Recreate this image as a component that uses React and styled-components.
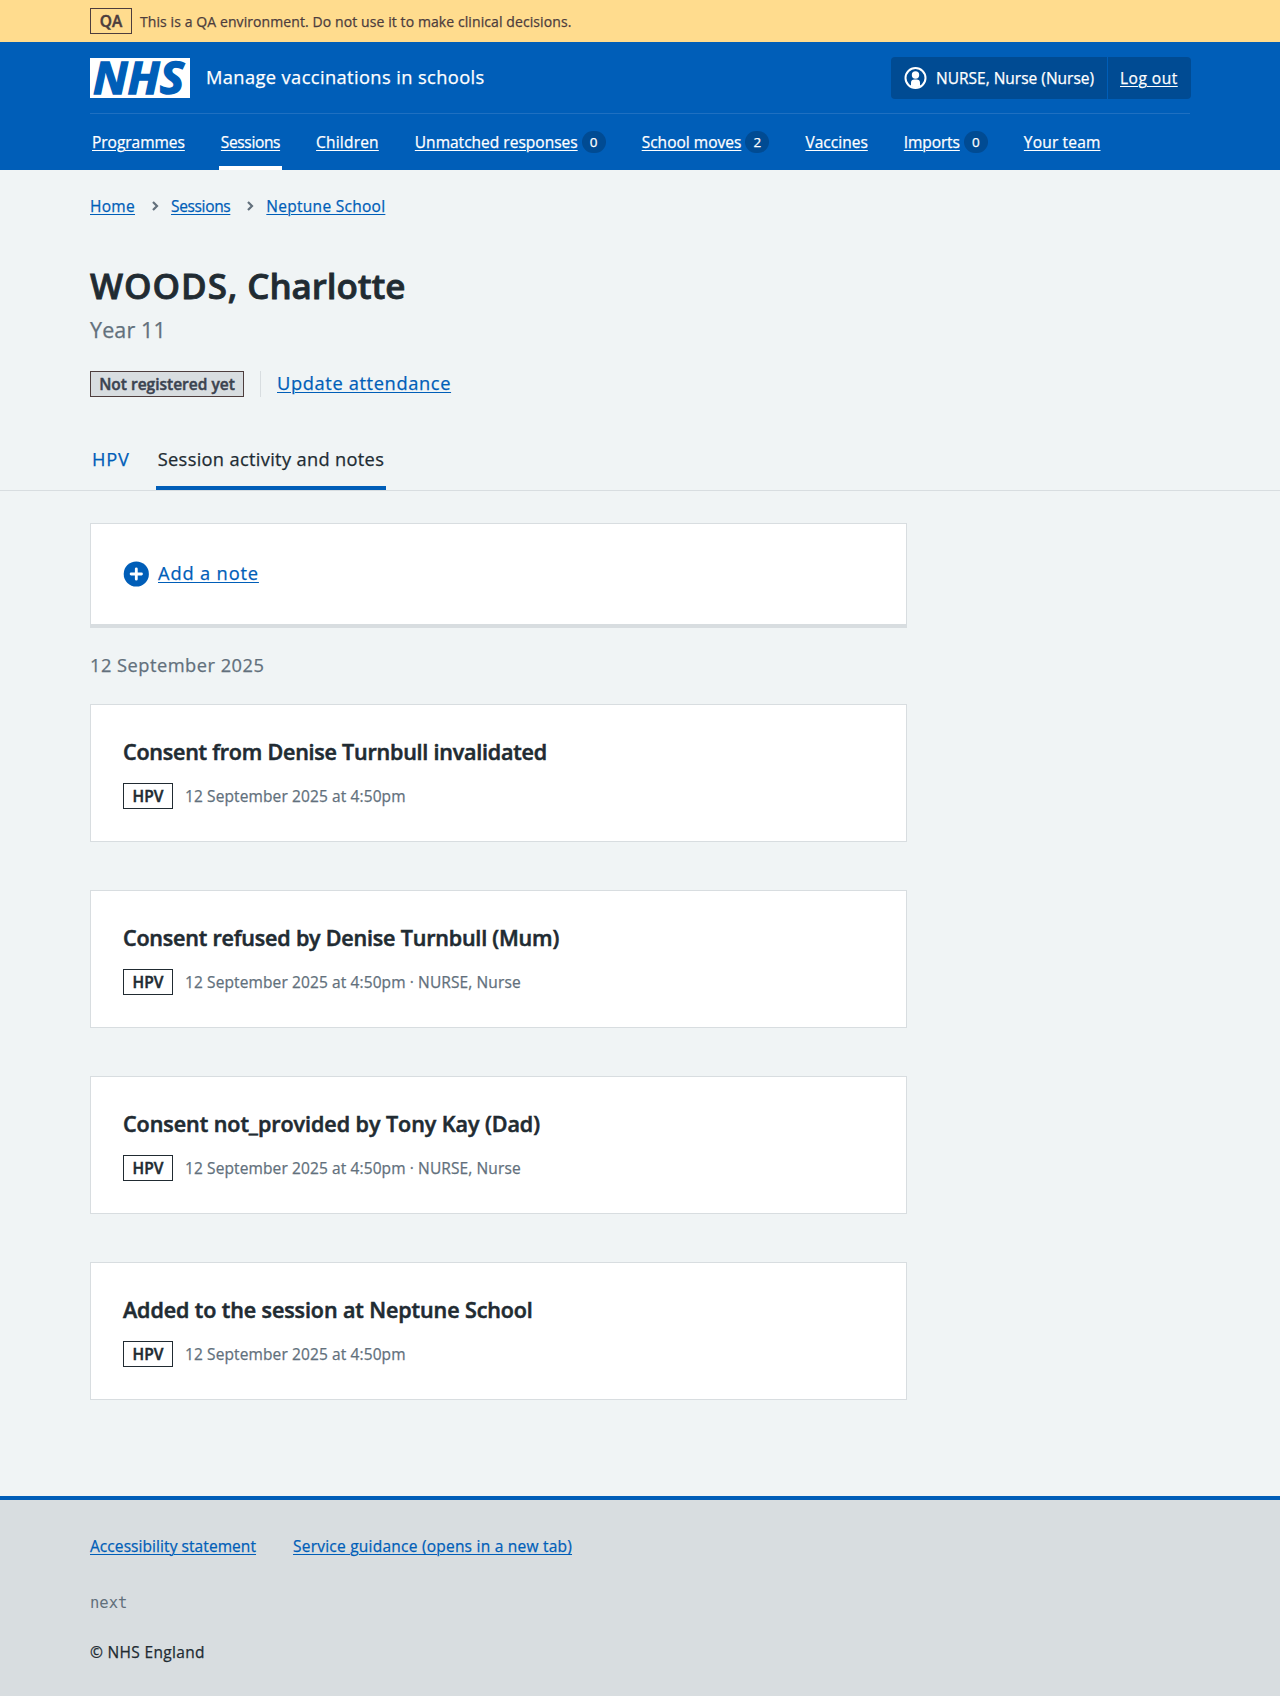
import React from "react";
import styled, { createGlobalStyle } from "styled-components";

const BLUE = "#005eb8";
const TEXT = "#212b32";
const GREY = "#d8dde0";
const MUTED = "#62707c";

const Global = createGlobalStyle`
  *, *::before, *::after { box-sizing: border-box; }
  body {
    margin: 0;
    background: #f0f4f5;
    color: ${TEXT};
    font-family: "Open Sans", "Noto Sans", "Liberation Sans", sans-serif;
    font-size: 15.5px;
    line-height: 24px;
    -webkit-text-stroke: 0.25px;
  }
  h1, h2, h3, p, ul, ol { margin: 0; padding: 0; font-weight: 400; list-style: none; }
`;

const Container = styled.div`
  width: 1100px;
  margin: 0 auto;
`;

const Banner = styled.div`
  height: 42px;
  background: #ffdc8e;
  color: #4d3d3d;
`;

const BannerRow = styled(Container)`
  display: flex;
  align-items: center;
  gap: 8px;
  height: 42px;
  font-size: 14px;
`;

const BannerText = styled.span`
  letter-spacing: 0.09px;
  padding-top: 1px;
`;

const Tag = styled.strong`
  display: inline-flex;
  align-items: center;
  justify-content: center;
  flex: none;
  width: ${(p) => p.$w}px;
  height: 26px;
  border: 1px solid ${(p) => p.$border || "currentColor"};
  background: ${(p) => p.$bg || "transparent"};
  color: ${(p) => p.$color || "inherit"};
  font-size: 15.5px;
  font-weight: 600;
  -webkit-text-stroke: 0.45px;
  letter-spacing: ${(p) => p.$track || 0}px;
  line-height: 24px;
`;

const Header = styled.header`
  height: 128px;
  background: ${BLUE};
  color: #fff;
`;

const HeaderTop = styled.div`
  display: flex;
  align-items: center;
  height: 72px;
  border-bottom: 1px solid #1f70c1;
`;

const Service = styled.span`
  margin-left: 16px;
  padding-bottom: 1px;
  font-size: 18.25px;
  letter-spacing: 0.4px;
`;

const Account = styled.div`
  display: flex;
  align-items: stretch;
  width: 300px;
  height: 42px;
  margin-left: auto;
  margin-right: -1px;
  border-radius: 4px;
  background: #004b93;
`;

const AccountUser = styled.div`
  display: flex;
  align-items: center;
  gap: 8px;
  width: 217px;
  padding-left: 13px;
  border-right: 1px solid ${BLUE};
  white-space: nowrap;
`;

const AccountAction = styled.div`
  display: flex;
  align-items: center;
  padding-left: 12px;
`;

const Link = styled.a`
  color: ${(p) => p.$color || BLUE};
  font-size: ${(p) => p.$size || 15.5}px;
  letter-spacing: ${(p) => p.$track || 0}px;
  text-decoration: underline;
  text-decoration-thickness: 1px;
  text-underline-offset: 2px;
  text-decoration-skip-ink: auto;
  white-space: nowrap;
`;

const LargeLink = styled(Link)`
  padding-bottom: 2px;
`;

const Nav = styled.ul`
  display: flex;
  gap: 32px;
  height: 56px;
`;

const NavItem = styled.li`
  display: flex;
  align-items: center;
  gap: 4px;
  height: 56px;
  padding: 4px 2px 0;
  border-bottom: 4px solid ${(p) => (p.$active ? "#fff" : "transparent")};
`;

const Count = styled.span`
  display: flex;
  align-items: center;
  justify-content: center;
  width: 24px;
  height: 22px;
  border-radius: 11px;
  background: #004b93;
  font-size: 13.5px;
`;

const Crumbs = styled.ol`
  display: flex;
  align-items: center;
  padding-top: 24px;
`;

const Chevron = styled.svg`
  display: block;
  margin: 0 11px 0 15px;
`;

const Title = styled.h1`
  margin-top: 44px;
  font-size: 35px;
  font-weight: 600;
  line-height: 48px;
  letter-spacing: -0.1px;
  -webkit-text-stroke: 0.8px;
`;

const Surname = styled.span`
  letter-spacing: 0.95px;
`;

const Caption = styled.p`
  margin-top: 4px;
  color: ${MUTED};
  font-size: 21.5px;
  line-height: 32px;
  letter-spacing: 0.12px;
`;

const StatusRow = styled.div`
  display: flex;
  align-items: center;
  gap: 16px;
  height: 26px;
  margin-top: 25px;
`;

const Divider = styled.span`
  width: 1px;
  height: 26px;
  background: ${GREY};
`;

const TabBar = styled.div`
  margin-top: 33px;
  border-bottom: 1px solid ${GREY};
`;

const Tabs = styled(Container)`
  display: flex;
  gap: 24px;
`;

const Tab = styled.span`
  height: 60px;
  padding: 17px 2px 0;
  border-bottom: 4px solid ${(p) => (p.$active ? BLUE : "transparent")};
  color: ${(p) => (p.$active ? TEXT : BLUE)};
  font-size: 18.25px;
  letter-spacing: ${(p) => p.$track}px;
`;

const Main = styled(Container)`
  padding: 32px 0 96px;
`;

const Column = styled.div`
  width: 817px;
`;

const Card = styled.section`
  padding: 32px;
  border: 1px solid ${GREY};
  background: #fff;
`;

const ActionCard = styled(Card)`
  display: flex;
  align-items: center;
  gap: 9px;
  height: 105px;
  border-bottom-width: 4px;
`;

const DateHeading = styled.h2`
  margin: 23px 0 25px;
  color: ${MUTED};
  font-size: 18.25px;
  line-height: 28px;
  letter-spacing: 0.49px;
`;

const Events = styled.div`
  display: grid;
  gap: 48px;
`;

const EventTitle = styled.h3`
  font-size: 21.5px;
  font-weight: 600;
  line-height: 30px;
  letter-spacing: ${(p) => p.$track}px;
  -webkit-text-stroke: 0.55px;
`;

const EventMeta = styled.div`
  display: flex;
  align-items: center;
  gap: 12px;
  height: 26px;
  margin-top: 16px;
  color: ${MUTED};
  letter-spacing: 0.11px;
`;

const Footer = styled.footer`
  height: 200px;
  border-top: 4px solid ${BLUE};
  background: ${GREY};
`;

const FooterLinks = styled.ul`
  display: flex;
  gap: 37px;
  padding-top: 34px;
`;

const Version = styled.p`
  margin-top: 33px;
  color: ${MUTED};
  font-family: "DejaVu Sans Mono", monospace;
  font-size: 15.5px;
  -webkit-text-stroke: 0;
`;

const Copyright = styled.p`
  margin-top: 25px;
  letter-spacing: 0.32px;
`;

const LogoSvg = styled.svg`
  display: block;
  overflow: visible;
  -webkit-text-stroke: 0;
`;

const Logo = () => (
  <LogoSvg width="100" height="40" viewBox="0 0 100 40" role="img" aria-label="NHS">
    <rect width="100" height="40" fill="#fff" />
    <text
      x="3"
      y="36"
      textLength="91"
      lengthAdjust="spacingAndGlyphs"
      fontFamily="Open Sans, sans-serif"
      fontSize="45"
      fontWeight="700"
      fontStyle="italic"
      fill={BLUE}
      stroke={BLUE}
      strokeWidth="1.4"
    >
      NHS
    </text>
  </LogoSvg>
);

const UserIcon = () => (
  <svg width="24" height="24" viewBox="0 0 24 24">
    <circle cx="11.5" cy="12" r="10" fill="none" stroke="#fff" strokeWidth="2" />
    <circle cx="11.5" cy="9" r="3.7" fill="#fff" />
    <path d="M7 20v-3.2a3.4 3.4 0 0 1 3.4-3.3h2.2a3.4 3.4 0 0 1 3.4 3.3V20q-4.5 3.6-9 0z" fill="#fff" />
  </svg>
);

const PlusIcon = () => (
  <svg width="26" height="26" viewBox="0 0 26 26">
    <circle cx="13.3" cy="13" r="12.6" fill={BLUE} />
    <path d="M13.3 7.8v10.4M8.1 13h10.4" stroke="#fff" strokeWidth="2.8" strokeLinecap="round" />
  </svg>
);

const NAV = [
  { label: "Programmes", track: -0.03 },
  { label: "Sessions", track: -0.36, active: true },
  { label: "Children", track: 0.2 },
  { label: "Unmatched responses", track: 0.01, count: 0 },
  { label: "School moves", track: 0.02, count: 2 },
  { label: "Vaccines", track: 0.02 },
  { label: "Imports", track: -0.1, count: 0 },
  { label: "Your team", track: 0.18 },
];

const CRUMBS = [
  { label: "Home", track: 0.3 },
  { label: "Sessions", track: -0.35 },
  { label: "Neptune School", track: 0.28 },
];

const EVENTS = [
  { title: "Consent from Denise Turnbull invalidated", meta: "12 September 2025 at 4:50pm", track: -0.22 },
  { title: "Consent refused by Denise Turnbull (Mum)", meta: "12 September 2025 at 4:50pm · NURSE, Nurse", track: -0.19 },
  { title: "Consent not_provided by Tony Kay (Dad)", meta: "12 September 2025 at 4:50pm · NURSE, Nurse", track: -0.04 },
  { title: "Added to the session at Neptune School", meta: "12 September 2025 at 4:50pm", track: -0.09 },
];

export default function App() {
  return (
    <>
      <Global />
      <Banner>
        <BannerRow>
          <Tag $w={42}>QA</Tag>
          <BannerText>This is a QA environment. Do not use it to make clinical decisions.</BannerText>
        </BannerRow>
      </Banner>
      <Header>
        <Container>
          <HeaderTop>
            <Logo />
            <Service>Manage vaccinations in schools</Service>
            <Account>
              <AccountUser>
                <UserIcon />
                NURSE, Nurse (Nurse)
              </AccountUser>
              <AccountAction>
                <Link $color="#fff" $track={0.5}>Log out</Link>
              </AccountAction>
            </Account>
          </HeaderTop>
          <Nav>
            {NAV.map((n) => (
              <NavItem key={n.label} $active={n.active}>
                <Link $color="#fff" $track={n.track}>{n.label}</Link>
                {n.count !== undefined && <Count>{n.count}</Count>}
              </NavItem>
            ))}
          </Nav>
        </Container>
      </Header>
      <Container>
        <Crumbs>
          {CRUMBS.map((c, i) => (
            <React.Fragment key={c.label}>
              {i > 0 && (
                <Chevron width="10" height="12" viewBox="0 0 10 12">
                  <path d="M3 2l4 4-4 4" fill="none" stroke={MUTED} strokeWidth="2.2" />
                </Chevron>
              )}
              <li>
                <Link $track={c.track}>{c.label}</Link>
              </li>
            </React.Fragment>
          ))}
        </Crumbs>
        <Title><Surname>WOODS,</Surname> Charlotte</Title>
        <Caption>Year 11</Caption>
        <StatusRow>
          <Tag $w={154} $bg={GREY} $border="#4d3d3d" $color="#3b4350">Not registered yet</Tag>
          <Divider />
          <LargeLink $size={18.25} $track={0.63}>Update attendance</LargeLink>
        </StatusRow>
      </Container>
      <TabBar>
        <Tabs>
          <Tab $track={0.8}>HPV</Tab>
          <Tab $active $track={0.32}>Session activity and notes</Tab>
        </Tabs>
      </TabBar>
      <Main>
        <Column>
          <ActionCard>
            <PlusIcon />
            <LargeLink $size={18.25} $track={0.85}>Add a note</LargeLink>
          </ActionCard>
          <DateHeading>12 September 2025</DateHeading>
          <Events>
            {EVENTS.map((e) => (
              <Card key={e.title}>
                <EventTitle $track={e.track}>{e.title}</EventTitle>
                <EventMeta>
                  <Tag $w={50} $color={TEXT}>HPV</Tag>
                  <span>{e.meta}</span>
                </EventMeta>
              </Card>
            ))}
          </Events>
        </Column>
      </Main>
      <Footer>
        <Container>
          <FooterLinks>
            <li><Link $track={0.07}>Accessibility statement</Link></li>
            <li><Link $track={0.23}>Service guidance (opens in a new tab)</Link></li>
          </FooterLinks>
          <Version>next</Version>
          <Copyright>© NHS England</Copyright>
        </Container>
      </Footer>
    </>
  );
}
